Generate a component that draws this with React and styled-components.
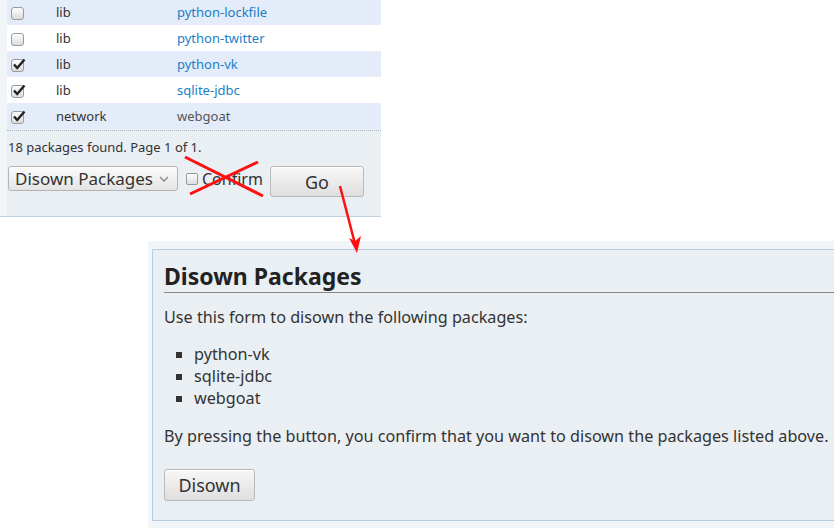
import styled, { createGlobalStyle } from "styled-components";

const GlobalStyle = createGlobalStyle`
  html, body {
    margin: 0;
    padding: 0;
    background: #ffffff;
  }
  body {
    font-family: "Noto Sans", "Open Sans", sans-serif;
    color: #333;
  }
`;

const Canvas = styled.div`
  position: relative;
  width: 834px;
  height: 528px;
  overflow: hidden;
  display: flex;
  flex-direction: column;
  align-items: flex-start;
`;

const TopPanel = styled.div`
  width: 381px;
  margin-top: -1px;
  background: #f2f5f8;
  padding-left: 7px;
  box-sizing: border-box;
  border-bottom: 1px solid #c3d1de;
`;

const PanelInner = styled.div`
  background: #eaeff4;
  padding-bottom: 19px;
`;

const Table = styled.div`
  border-bottom: 1px dotted #a9b4c0;
  padding-bottom: 1px;
`;

const Row = styled.div`
  display: grid;
  grid-template-columns: 49px 121px 1fr;
  align-items: center;
  height: 26px;
  background: ${(p) => (p.$alt ? "#ffffff" : "#e4ecfa")};
  font-size: 13px;
`;

const Cell = styled.div`
  padding-left: ${(p) => p.$pad || 0}px;
  color: ${(p) => p.$color || "#333"};
`;

const Box = styled.span`
  display: inline-flex;
  width: 11px;
  height: 11px;
  border: 1px solid #9a9a9a;
  border-radius: 3px;
  background: linear-gradient(#fdfdfd, #dcdcdc);
  position: relative;
  vertical-align: middle;
`;

const Tick = styled.svg`
  position: absolute;
  left: 0px;
  top: -3px;
`;

const Check = ({ checked }) => (
  <Box>
    {checked && (
      <Tick width="14" height="14" viewBox="0 0 14 14">
        <path d="M2 7.5 L5.2 11 L12.5 2.5" fill="none" stroke="#222" strokeWidth="2.4" />
      </Tick>
    )}
  </Box>
);

const Status = styled.div`
  font-size: 13px;
  line-height: 18px;
  padding: 7px 1px 0;
  height: 28px;
`;

const Controls = styled.div`
  display: flex;
  align-items: flex-start;
  padding-left: 1px;
`;

const Select = styled.div`
  width: 170px;
  height: 25px;
  box-sizing: border-box;
  border: 1px solid #b4b4b4;
  border-radius: 3px;
  background: linear-gradient(#fbfbfb, #e4e4e4);
  display: flex;
  align-items: center;
  justify-content: space-between;
  padding: 0 8px 0 6px;
  font-size: 17px;
  white-space: nowrap;
  color: #333;
`;

const Chevron = styled.svg`
  margin-top: 1px;
  flex-shrink: 0;
`;

const ConfirmLabel = styled.label`
  display: flex;
  align-items: center;
  gap: 4px;
  height: 25px;
  font-size: 16px;
  margin-left: 8px;
  color: #333;
`;

const SmallBox = styled.span`
  width: 10px;
  height: 10px;
  border: 1px solid #999;
  border-radius: 2px;
  background: linear-gradient(#fdfdfd, #dedede);
`;

const Button = styled.button`
  font-family: "Noto Sans", "Open Sans", sans-serif;
  font-size: 18px;
  color: #333;
  width: ${(p) => p.$w}px;
  height: ${(p) => p.$h}px;
  border: 1px solid #b9b9b9;
  border-radius: 3px;
  background: linear-gradient(#f7f7f7, #dfdfdf);
  box-shadow: inset 0 1px 0 #fff;
  padding: 0;
  margin-left: ${(p) => p.$ml || 0}px;
  margin-top: ${(p) => p.$mt || 0}px;
`;

const BottomOuter = styled.div`
  margin-left: 148px;
  margin-top: 24px;
  width: 686px;
  background: #f2f5f8;
  padding: 8px 0 7px 4px;
  box-sizing: border-box;
`;

const BottomBox = styled.div`
  background: #eaeff4;
  border: 1px solid #b8cce0;
  border-right: none;
  padding: 11px 0 19px 11px;
`;

const Heading = styled.h2`
  margin: 0;
  font-size: 23px;
  font-weight: 700;
  color: #222;
  line-height: 30px;
  padding-bottom: 1px;
  border-bottom: 1px solid #888;
`;

const Para = styled.p`
  margin: ${(p) => p.$m};
  font-size: 16.2px;
  line-height: 22px;
  color: #333;
`;

const List = styled.ul`
  list-style: square;
  margin: 15px 0 16px 0;
  padding-left: 30px;
  font-size: 16.2px;
  line-height: 22px;
  color: #333;
`;

const Overlay = styled.svg`
  position: absolute;
  left: 0;
  top: 0;
  pointer-events: none;
`;

const rows = [
  { checked: false, cat: "lib", name: "python-lockfile", link: true },
  { checked: false, cat: "lib", name: "python-twitter", link: true },
  { checked: true, cat: "lib", name: "python-vk", link: true },
  { checked: true, cat: "lib", name: "sqlite-jdbc", link: true },
  { checked: true, cat: "network", name: "webgoat", link: false },
];

export default function App() {
  return (
    <>
      <GlobalStyle />
      <Canvas>
        <TopPanel>
          <PanelInner>
            <Table>
              {rows.map((r, i) => (
                <Row key={r.name} $alt={i % 2 === 1}>
                  <Cell $pad={4}>
                    <Check checked={r.checked} />
                  </Cell>
                  <Cell>{r.cat}</Cell>
                  <Cell $color={r.link ? "#1b7fc6" : "#555"}>{r.name}</Cell>
                </Row>
              ))}
            </Table>
            <Status>18 packages found. Page 1 of 1.</Status>
            <Controls>
              <Select>
                Disown Packages
                <Chevron width="10" height="6" viewBox="0 0 10 6">
                  <path d="M1 1 L5 5 L9 1" fill="none" stroke="#888" strokeWidth="1.3" />
                </Chevron>
              </Select>
              <ConfirmLabel>
                <SmallBox />
                Confirm
              </ConfirmLabel>
              <Button $w={94} $h={31} $ml={7}>
                Go
              </Button>
            </Controls>
          </PanelInner>
        </TopPanel>
        <BottomOuter>
          <BottomBox>
            <Heading>Disown Packages</Heading>
            <Para $m="13px 0 0 0">Use this form to disown the following packages:</Para>
            <List>
              <li>python-vk</li>
              <li>sqlite-jdbc</li>
              <li>webgoat</li>
            </List>
            <Para $m="0">
              By pressing the button, you confirm that you want to disown the packages listed above.
            </Para>
            <Button $w={91} $h={32} $mt={22}>
              Disown
            </Button>
          </BottomBox>
        </BottomOuter>
        <Overlay width="834" height="528" viewBox="0 0 834 528">
          <line x1="185" y1="157" x2="263" y2="196" stroke="#ff1010" strokeWidth="3" />
          <line x1="190" y1="194" x2="258" y2="162" stroke="#ff1010" strokeWidth="3" />
          <line x1="340" y1="186" x2="355" y2="244" stroke="#ff1010" strokeWidth="2.5" />
          <path d="M349 238 L357 253 L361 236 L355 241 Z" fill="#ff1010" />
        </Overlay>
      </Canvas>
    </>
  );
}
